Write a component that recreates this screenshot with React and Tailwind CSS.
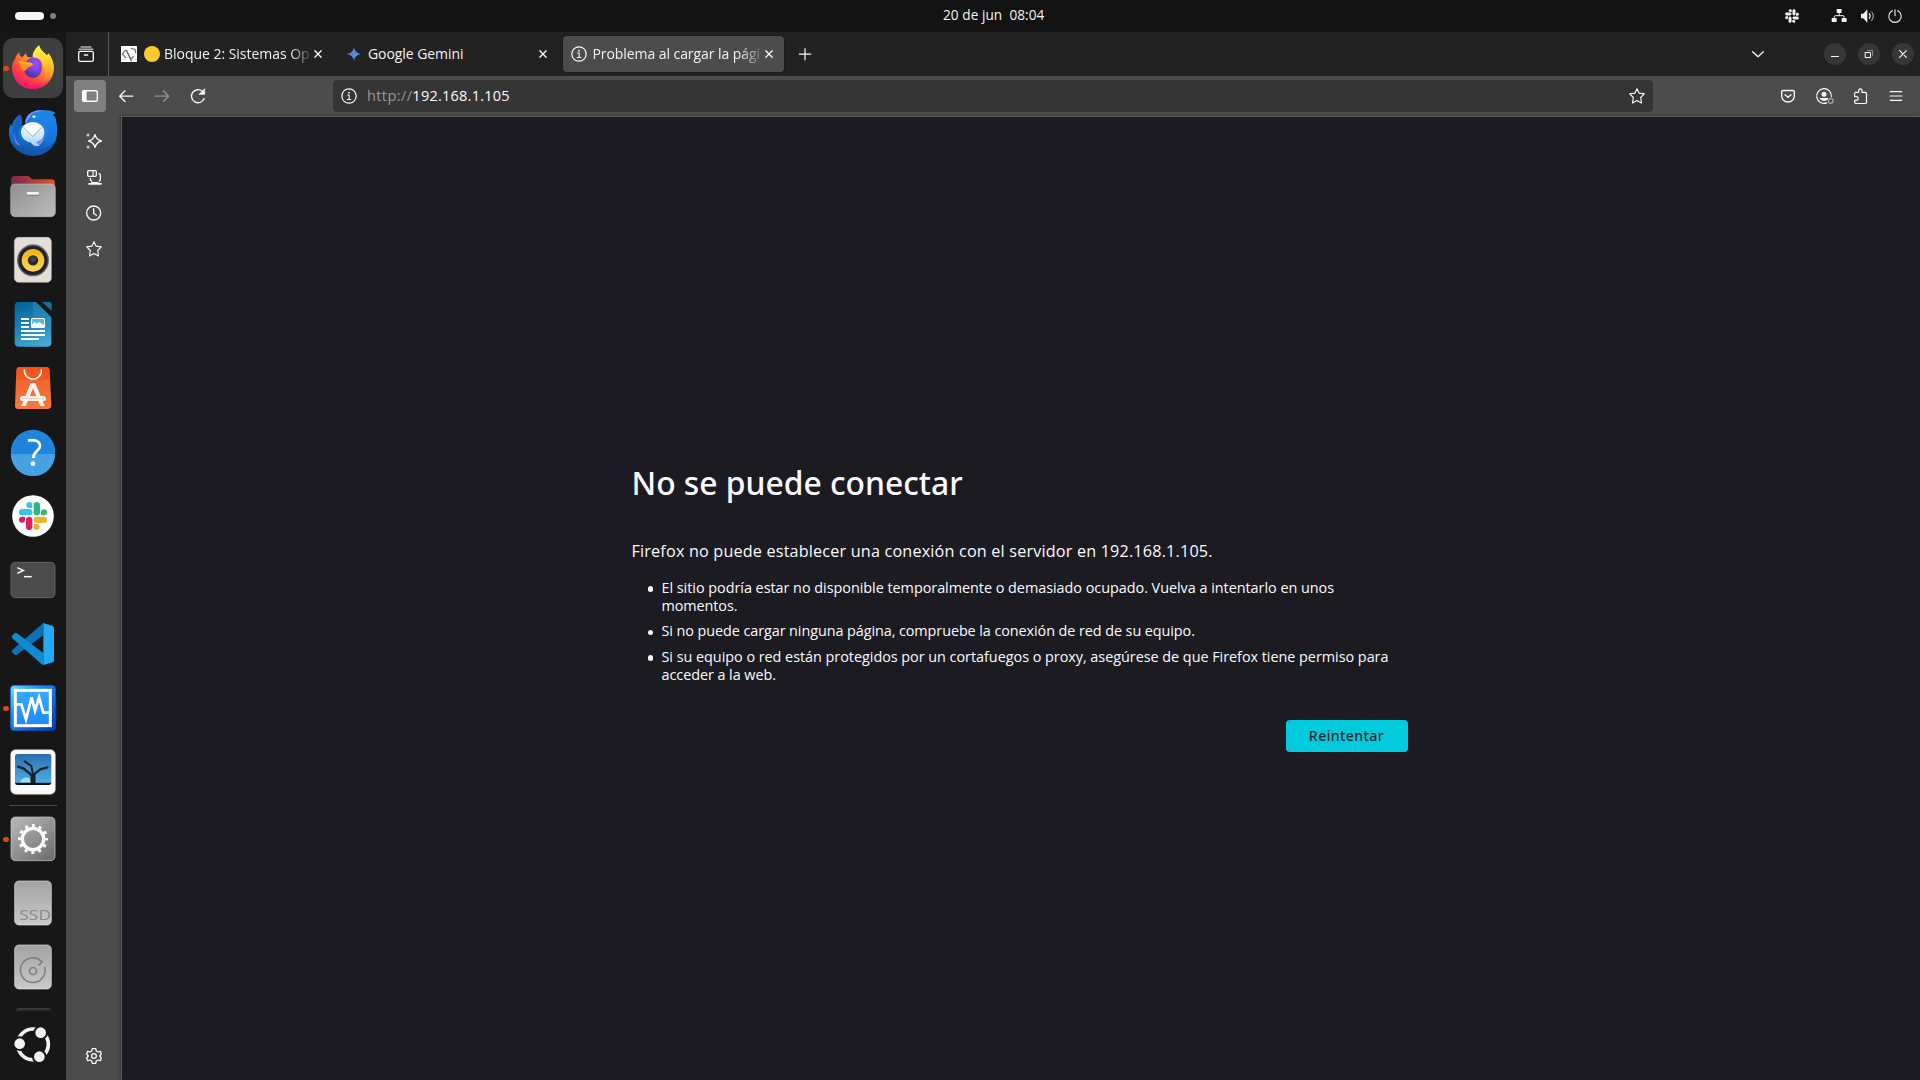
import React from "react";

/* Icons are drawn on a grid of three units per pixel, centred on (x, y). */
function Ico({ x, y, s = 24, className = "", children }) {
  return (
    <svg
      width={s}
      height={s}
      viewBox={`${x - 1.5 * s} ${y - 1.5 * s} ${3 * s} ${3 * s}`}
      fill="none"
      stroke="#fbfbfe"
      strokeWidth="3.6"
      strokeLinecap="round"
      strokeLinejoin="round"
      className={`block shrink-0 ${className}`}
    >
      {children}
    </svg>
  );
}

function DockIcon({ x = 99, y, running, active, children }) {
  return (
    <div className="relative flex h-16 w-full shrink-0 items-center justify-center">
      <div className={`flex size-[60px] items-center justify-center rounded-[11px] ${active ? "bg-[#3f3f3f]" : ""}`}>
        <svg width="48" height="48" viewBox={`${x - 72} ${y - 72} 144 144`} fill="none" className="block">
          {children}
        </svg>
      </div>
      {running && <span className="absolute left-[3px] top-[29.500px] size-[5.500px] rounded-full bg-[#dd4814]" />}
    </div>
  );
}

const Close = ({ x = 954, y = 162 }) => (
  <Ico x={x} y={y} s={16}>
    <path d={`M${x - 9.5} ${y - 9.5}l19 19M${x + 9.5} ${y - 9.5}l-19 19`} strokeWidth="4" />
  </Ico>
);

const Info = ({ s = 16 }) => (
  <Ico x={0} y={0} s={s}>
    <circle r="21.5" />
    <path d="M-4 -3h4.500v13.500M-5 10.500h10" strokeWidth="3.200" />
    <circle cx="0" cy="-10" r="2.600" fill="#fbfbfe" stroke="none" />
  </Ico>
);

const Star = ({ s = 24 }) => (
  <Ico x={0} y={0} s={s}>
    <path d="M0 -22L6.500 -8.500L22 -6.500L11 4.500L13.500 21L0 13.500L-13.500 21L-11 4.500L-22 -6.500L-6.500 -8.500Z" strokeWidth="3.400" />
  </Ico>
);

function TopBar() {
  return (
    <header className="flex h-8 w-full shrink-0 items-center bg-[#131313]">
      <div className="flex w-[943px] items-center gap-1.5 pl-[15px]">
        <span className="h-2 w-[29px] rounded-full bg-[#f6f6f6]" />
        <span className="size-1.5 rounded-full bg-[#808080]" />
      </div>
      <div className="whitespace-pre pb-[2px] text-[13.6px] leading-5 tracking-[0.06px] text-[#f2f2f2]">20 de jun  08:04</div>
      <div className="ml-auto flex items-center pr-[13px]">
        <Ico x={576} y={48} className="mr-[23px]">
          <g fill="#f2f2f2" stroke="none" transform="translate(576 48) scale(.49) translate(-99 -318)">
            <rect x="57" y="297" width="39" height="18" rx="9" />
            <path d="M97 294H88A9 9 0 1 1 97 285Z" />
            <rect x="102" y="276" width="18" height="39" rx="9" />
            <path d="M123 316V307A9 9 0 1 1 132 316Z" />
            <rect x="78" y="321" width="18" height="39" rx="9" />
            <path d="M75 320V329A9 9 0 1 1 66 320Z" />
            <rect x="102" y="321" width="39" height="18" rx="9" />
            <path d="M101 342H110A9 9 0 1 1 101 351Z" />
          </g>
        </Ico>
        <Ico x={718} y={48} className="mr-[5px]">
          <g fill="#f2f2f2" stroke="none">
            <rect x="711" y="27" width="15" height="12" rx="2" />
            <rect x="696" y="54" width="15" height="12" rx="2" />
            <rect x="726" y="54" width="15" height="12" rx="2" />
          </g>
          <path d="M718.500 39v7M704 54v-4q0-3 3-3h23q3 0 3 3v4" stroke="#f2f2f2" strokeWidth="3" />
        </Ico>
        <Ico x={804} y={48} className="mr-[3px]">
          <path d="M783 41h7l12-13v40l-12-13h-7z" fill="#f2f2f2" stroke="none" />
          <path d="M808 41q5 7 0 14" stroke="#f2f2f2" strokeWidth="3.500" />
          <path d="M815 36q10 12 0 25" stroke="#a0a0a0" strokeWidth="3.500" />
        </Ico>
        <Ico x={886} y={47}>
          <path d="M878 31a18.500 18.500 0 1 0 16 0M886 28v18" stroke="#f2f2f2" strokeWidth="3.200" />
        </Ico>
      </div>
    </header>
  );
}

function Dock() {
  return (
    <nav className="flex h-full w-[66px] shrink-0 flex-col bg-[#171717] pt-1">
      <DockIcon y={204} running active>
        <defs>
          <linearGradient id="ffBody" x1="145" y1="150" x2="62" y2="258" gradientUnits="userSpaceOnUse">
            <stop offset="0" stopColor="#fff44f" />
            <stop offset=".28" stopColor="#ffb72a" />
            <stop offset=".55" stopColor="#ff6a30" />
            <stop offset=".8" stopColor="#ff3647" />
            <stop offset="1" stopColor="#e81e78" />
          </linearGradient>
          <linearGradient id="ffBottom" x1="99" y1="232" x2="99" y2="267" gradientUnits="userSpaceOnUse">
            <stop offset="0" stopColor="#ff3750" stopOpacity="0" />
            <stop offset="1" stopColor="#e8127c" />
          </linearGradient>
          <radialGradient id="ffBall" cx="108" cy="192" r="38" gradientUnits="userSpaceOnUse">
            <stop offset="0" stopColor="#a64bff" />
            <stop offset=".55" stopColor="#7a43e0" />
            <stop offset="1" stopColor="#5036ad" />
          </radialGradient>
          <linearGradient id="ffFlame" x1="115" y1="138" x2="140" y2="245" gradientUnits="userSpaceOnUse">
            <stop offset="0" stopColor="#fff44f" />
            <stop offset=".45" stopColor="#ffd02e" />
            <stop offset="1" stopColor="#ff8a26" stopOpacity="0" />
          </linearGradient>
        </defs>
        <path d="M58 157C57 164 60 169 66 172L79 160C78 165 80 169 84 172L100 172C98 156 108 145 117 136C120 147 125 151 131 157L139 168L146 160C156 174 162 188 162 205A63 62 0 1 1 36 204C36 192 40 184 45 177C47 169 52 163 58 157Z" fill="url(#ffBody)" />
        <path d="M41 230A63 62 0 0 0 157 230C140 256 62 258 41 230Z" fill="url(#ffBottom)" />
        <path d="M98 170C98 155 108 145 117 136C120 147 125 151 131 157C145 170 152 175 155 190C160 215 150 235 128 248C138 230 137 205 125 188C117 178 108 174 98 170Z" fill="url(#ffFlame)" />
        <path d="M80 184C88 172 103 168 120 180L124 187C128 205 126 228 102 234C84 235 73 222 72 208Z" fill="url(#ffBall)" />
        <path d="M54 184C64 180 73 187 83 187C90 187 97 190 99 194C96 199 89 200 84 203C76 209 81 211 72 213C60 207 61 193 54 184Z" fill="#ff8f1f" />
        <path d="M55 184C64 180 73 187 83 187C90 187 97 190 98 193C85 195 68 195 55 184Z" fill="#ffb52e" />
      </DockIcon>
      <DockIcon y={396}>
        <defs>
          <linearGradient id="tbBody" x1="120" y1="332" x2="90" y2="468" gradientUnits="userSpaceOnUse">
            <stop offset="0" stopColor="#1b87ee" />
            <stop offset=".6" stopColor="#1673d8" />
            <stop offset="1" stopColor="#0f4f9f" />
          </linearGradient>
          <linearGradient id="tbEgg" x1="98" y1="364" x2="98" y2="434" gradientUnits="userSpaceOnUse">
            <stop offset="0" stopColor="#ffffff" />
            <stop offset="1" stopColor="#b4d9fd" />
          </linearGradient>
        </defs>
        <path d="M77 372C72 345 100 326 132 331C148 330 160 334 167 340L158 344C167 350 169 358 168 364C172 376 172 390 171 399A72 69 0 0 1 27 399C26 386 29 379 33 371L36 380C39 362 48 350 60 344C68 354 68 366 64 378Z" fill="url(#tbBody)" />
        <path d="M60 344C68 354 68 366 64 378C54 392 52 408 58 424C40 414 34 394 41 372C45 358 51 350 60 344Z" fill="#1660bd" />
        <path d="M76 374C72 348 98 328 128 331C110 336 96 342 90 352C84 358 78 364 76 374Z" fill="#8d8cf3" />
        <path d="M50 386C40 405 46 424 60 434C49 440 34 412 50 386Z" fill="#6e83ec" />
        <path d="M88 352C94 336 120 332 136 338C152 368 146 420 116 432C132 400 124 372 88 352Z" fill="#1c82e8" />
        <path d="M34 424A72 69 0 0 0 169 415C150 460 60 462 34 424Z" fill="#1258ad" />
        <path d="M92 426C104 434 122 426 131 411C132 428 118 438 106 439C98 436 94 432 92 426Z" fill="#8f94f5" />
        <ellipse cx="98" cy="397" rx="35" ry="31" fill="url(#tbEgg)" />
        <path d="M88 420C94 432 106 438 120 438C110 432 106 426 106 418Z" fill="#b4d9fd" />
        <path d="M71 382L98 410L125 382" stroke="#9fb4c8" strokeWidth="3" strokeLinejoin="round" />
        <path d="M72 381L98 406L124 381Q98 358 72 381Z" fill="#f8fbff" />
        <ellipse cx="102" cy="350" rx="5" ry="3.500" fill="#e8f4ff" />
      </DockIcon>
      <DockIcon y={588}>
        <defs>
          <linearGradient id="fBack" x1="33" y1="0" x2="165" y2="0" gradientUnits="userSpaceOnUse">
            <stop offset="0" stopColor="#772953" />
            <stop offset="1" stopColor="#e95420" />
          </linearGradient>
          <linearGradient id="fFront" x1="60" y1="552" x2="140" y2="650" gradientUnits="userSpaceOnUse">
            <stop offset="0" stopColor="#949494" />
            <stop offset="1" stopColor="#b8b8b8" />
          </linearGradient>
        </defs>
        <path d="M33 580V540Q33 528 45 528H82Q87 528 90 532L94 536Q96 538 100 538H154Q165 538 165 550V580Z" fill="url(#fBack)" />
        <rect x="32" y="552" width="134" height="98" rx="13" fill="url(#fFront)" stroke="#c8c8c8" strokeWidth="1.500" />
        <rect x="80" y="579" width="37" height="8" rx="4" fill="#777" />
        <rect x="80" y="576" width="37" height="8" rx="4" fill="#f4f4f4" />
      </DockIcon>
      <DockIcon y={120}>
        <defs>
          <linearGradient id="rbY" x1="0" y1="85" x2="0" y2="155" gradientUnits="userSpaceOnUse">
            <stop offset="0" stopColor="#eab308" />
            <stop offset="1" stopColor="#ffd95a" />
          </linearGradient>
        </defs>
        <rect x="43" y="52" width="111" height="135" rx="13" fill="#e4dfd6" stroke="#c9c5bc" strokeWidth="1.500" />
        <circle cx="99" cy="121" r="48" fill="#6a6a6e" />
        <circle cx="99" cy="121" r="44" fill="#20202c" />
        <circle cx="99" cy="121" r="34" fill="url(#rbY)" />
        <circle cx="99" cy="121" r="15.500" fill="#262626" />
        <circle cx="99" cy="118" r="9" fill="#444" />
      </DockIcon>
      <DockIcon y={312}>
        <defs>
          <linearGradient id="wr" x1="60" y1="246" x2="120" y2="380" gradientUnits="userSpaceOnUse">
            <stop offset="0" stopColor="#05629a" />
            <stop offset=".5" stopColor="#1c84b8" />
            <stop offset="1" stopColor="#46a8d6" />
          </linearGradient>
        </defs>
        <path d="M56 246H108L154 292V368Q154 380 142 380H56Q44 380 44 368V258Q44 246 56 246Z" fill="url(#wr)" />
        <path d="M99 246H108L154 292V312H99Z" fill="#3c93bd" opacity=".35" />
        <path d="M126 246H148Q155 246 155 253V273Z" fill="#1c6c98" />
        <path d="M63 297H87M63 309H87M63 321H87M63 333H135M63 345H135M63 357H117" stroke="#fff" strokeWidth="6" />
        <rect x="94.500" y="295.500" width="39" height="27" rx="4" fill="#5ab8e0" stroke="#fff" strokeWidth="3.500" />
        <path d="M96 320V314L104 305L110 311L118 306L126 312L132 316V321Z" fill="#fff" />
      </DockIcon>
      <DockIcon y={504}>
        <defs>
          <linearGradient id="st" x1="0" y1="440" x2="0" y2="568" gradientUnits="userSpaceOnUse">
            <stop offset="0" stopColor="#f4501d" />
            <stop offset=".3" stopColor="#f4591f" />
            <stop offset=".31" stopColor="#f3652f" />
            <stop offset="1" stopColor="#f47a40" />
          </linearGradient>
        </defs>
        <path d="M57 441H141Q148 441 149 449L154 556Q154 567 143 567H55Q44 567 45 556L49 449Q50 441 57 441Z" fill="url(#st)" />
        <path d="M73 449C72 487 126 487 124 449" stroke="#fff" strokeWidth="4.500" strokeLinecap="round" />
        <path d="M92 489H106L134 558H121L99 505L77 558H64Z" fill="#fff4ee" />
        <rect x="60" y="528" width="78" height="15" rx="7.500" fill="#fff4ee" />
        <path d="M66 536H132" stroke="#f9b498" strokeWidth="2" />
      </DockIcon>
      <DockIcon y={126}>
        <circle cx="99" cy="126" r="66.500" fill="#2084dc" />
        <path d="M32.500 132A66.500 66.500 0 0 0 165.500 132Z" fill="#46a2e2" />
        <path d="M84 92C100 88 120 92 120 108C120 122 100 124 100 144" stroke="#fff" strokeWidth="8" />
        <circle cx="99" cy="161" r="7" fill="#fff" />
      </DockIcon>
      <DockIcon y={318}>
        <circle cx="99" cy="318" r="62.500" fill="#fff" />
        <rect x="57" y="297" width="40" height="19" rx="9.500" fill="#36c5f0" />
        <path d="M97 294H88A9 9 0 1 1 97 285Z" fill="#36c5f0" />
        <rect x="101" y="276" width="19" height="40" rx="9.500" fill="#2eb67d" />
        <path d="M123 316V307A9 9 0 1 1 132 316Z" fill="#2eb67d" />
        <rect x="78" y="320" width="19" height="40" rx="9.500" fill="#e01e5a" />
        <path d="M75 320V329A9 9 0 1 1 66 320Z" fill="#e01e5a" />
        <rect x="101" y="320" width="40" height="19" rx="9.500" fill="#ecb22e" />
        <path d="M101 342H110A9 9 0 1 1 101 351Z" fill="#ecb22e" />
      </DockIcon>
      <DockIcon y={510}>
        <rect x="33" y="457" width="132" height="106" rx="13" fill="#4b4b4b" stroke="#6c6c6c" strokeWidth="2.500" />
        <path d="M52 473L70 481.500L52 490" stroke="#fff" strokeWidth="4.500" />
        <path d="M72 500H95" stroke="#fff" strokeWidth="4.500" />
      </DockIcon>
      <DockIcon y={132}>
        <path d="M130 69L36 151V157L45 165Q48 166 51 164L130 106Z" fill="#0a72b6" />
        <path d="M36 107L45 99Q48 98 51 100L130 159V195Q127 195 125 193L36 114Z" fill="#108bd3" />
        <path d="M130 69L158 78Q162 80 162 84V181Q162 185 158 187L130 195Z" fill="#26a9f4" />
      </DockIcon>
      <DockIcon y={324} running>
        <defs>
          <linearGradient id="vb" x1="31" y1="256" x2="167" y2="392" gradientUnits="userSpaceOnUse">
            <stop offset="0" stopColor="#6fe0fa" />
            <stop offset=".35" stopColor="#1d8df2" />
            <stop offset="1" stopColor="#0534b4" />
          </linearGradient>
          <linearGradient id="vb2" x1="0" y1="275" x2="0" y2="373" gradientUnits="userSpaceOnUse">
            <stop offset="0" stopColor="#35aafb" />
            <stop offset="1" stopColor="#2588f6" />
          </linearGradient>
        </defs>
        <rect x="31" y="256" width="136" height="136" rx="12" fill="url(#vb)" stroke="#0a4fc0" strokeWidth="2" />
        <rect x="46" y="271" width="105" height="106" fill="url(#vb2)" stroke="#fff" strokeWidth="9" />
        <path d="M50 313H64L78 358L95 292L105 332L117 292L130 338H148" stroke="#fff" strokeWidth="8" strokeLinejoin="miter" />
      </DockIcon>
      <DockIcon y={516}>
        <defs>
          <linearGradient id="sh" x1="0" y1="462" x2="0" y2="554" gradientUnits="userSpaceOnUse">
            <stop offset="0" stopColor="#2a6db0" />
            <stop offset="1" stopColor="#4fb4e8" />
          </linearGradient>
        </defs>
        <rect x="32" y="449" width="134" height="134" rx="15" fill="#fafafa" stroke="#c8c8c8" strokeWidth="1.500" />
        <rect x="45" y="462" width="109" height="92" rx="7" fill="url(#sh)" />
        <path d="M60 549A20 24 0 0 1 98 549Z" fill="#a4dbf8" />
        <path d="M45 548H154Q153 555 147 555H52Q46 555 45 548Z" fill="#06111b" />
        <path d="M99 549V524" stroke="#14222e" strokeWidth="15" />
        <path d="M98 528L70 505L54 500M101 524L121 508L142 502" stroke="#14222e" strokeWidth="7" strokeLinecap="round" />
        <path d="M99 524L94 498L74 484" stroke="#14222e" strokeWidth="6" strokeLinecap="round" />
      </DockIcon>
      <div className="flex h-[3px] shrink-0 items-center justify-center">
        <span className="h-px w-12 bg-[#4a4a4a]" />
      </div>
      <DockIcon y={147} running>
        <defs>
          <linearGradient id="gr" x1="40" y1="80" x2="150" y2="214" gradientUnits="userSpaceOnUse">
            <stop offset="0" stopColor="#b8b8b8" />
            <stop offset="1" stopColor="#6e6e6e" />
          </linearGradient>
        </defs>
        <rect x="33" y="81" width="132" height="131" rx="13" fill="url(#gr)" stroke="#cfcfcf" strokeWidth="2" />
        <circle cx="99" cy="147" r="32" stroke="#fafafa" strokeWidth="10" />
        <circle cx="99" cy="147" r="40" stroke="#fafafa" strokeWidth="10" strokeDasharray="9 11.944" strokeDashoffset="4.500" />
      </DockIcon>
      <DockIcon y={339}>
        <defs>
          <linearGradient id="dk" x1="0" y1="272" x2="0" y2="406" gradientUnits="userSpaceOnUse">
            <stop offset="0" stopColor="#a2a2a2" />
            <stop offset="1" stopColor="#cacaca" />
          </linearGradient>
        </defs>
        <rect x="44" y="273" width="110" height="132" rx="13" fill="url(#dk)" stroke="#dedede" strokeWidth="2" />
        <text x="58" y="389" fontSize="46" textLength="95" lengthAdjust="spacingAndGlyphs" fill="#888" fontFamily="Open Sans, sans-serif">SSD</text>
      </DockIcon>
      <DockIcon y={531}>
        <defs>
          <linearGradient id="dk2" x1="0" y1="464" x2="0" y2="598" gradientUnits="userSpaceOnUse">
            <stop offset="0" stopColor="#a2a2a2" />
            <stop offset="1" stopColor="#cacaca" />
          </linearGradient>
        </defs>
        <rect x="44" y="465" width="110" height="132" rx="13" fill="url(#dk2)" stroke="#dedede" strokeWidth="2" />
        <circle cx="99" cy="543" r="10.500" stroke="#808080" strokeWidth="5" />
        <path d="M134 531A37 37 0 1 1 126 516L116 526" stroke="#808080" strokeWidth="5" />
      </DockIcon>
      <div className="flex h-[13px] shrink-0 items-end justify-center pb-px">
        <span className="h-[3px] w-[35px] rounded-t-md bg-linear-to-b from-[#404040] to-[#242424]" />
      </div>
      <DockIcon y={762}>
        <circle cx="99" cy="763" r="46" stroke="#f4f4f4" strokeWidth="11" />
        <g stroke="#171717" strokeWidth="6" fill="#f4f4f4">
          <circle cx="122" cy="728" r="19" />
          <circle cx="59" cy="761" r="19" />
          <circle cx="118" cy="800" r="19" />
        </g>
      </DockIcon>
    </nav>
  );
}

function TabStrip() {
  return (
    <div className="flex h-11 shrink-0 items-center bg-[#222222]">
      <div className="flex h-11 w-[43px] shrink-0 items-center justify-center border-r border-[#5b5b5b] pr-[2px]">
        <Ico x={258} y={162}>
          <rect x="236" y="154" width="44" height="30" rx="5" strokeWidth="4" />
          <path d="M237 147.500H279M243 141H273" strokeWidth="3" />
          <path d="M253 165H263" strokeWidth="4" />
        </Ico>
      </div>
      <div className="flex items-center gap-1 pl-1">
        <div className="flex h-9 w-[221px] items-center pl-2">
          <Ico x={387} y={162} s={16} className="mr-[7px]">
            <rect x="363" y="138" width="48" height="48" fill="#fff" stroke="none" />
            <path d="M376 151L367 162L377 173M394 145L405 148L407 158M400 170L392 176" stroke="#777" strokeWidth="4" />
            <path d="M380 152L394 182" stroke="#555" strokeWidth="4" />
            <path d="M366 178H378M398 178H410" stroke="#dcdcdc" strokeWidth="3" />
          </Ico>
          <span className="mr-[4px] size-4 shrink-0 rounded-full bg-[#fdcb2e]" />
          <span className="h-5 w-[146px] overflow-hidden whitespace-nowrap text-[14px] leading-5 tracking-[-0.03px] text-[#f2f2f4] [mask-image:linear-gradient(to_right,black_126px,transparent_150px)]">
            Bloque 2: Sistemas Op
          </span>
          <Close />
        </div>
        <div className="flex h-9 w-[221px] items-center pl-2">
          <Ico x={1062} y={162} s={16} className="mr-[6px]">
            <defs>
              <linearGradient id="gem" x1="1042" y1="0" x2="1082" y2="0" gradientUnits="userSpaceOnUse">
                <stop offset="0" stopColor="#7a78d8" />
                <stop offset="1" stopColor="#2f9be0" />
              </linearGradient>
            </defs>
            <path d="M1062 142Q1065 159 1083 162Q1065 165 1062 182Q1059 165 1041 162Q1059 159 1062 142Z" fill="url(#gem)" stroke="none" />
          </Ico>
          <span className="w-[167px] whitespace-nowrap text-[14px] leading-5 tracking-[-0.07px] text-[#f2f2f4]">Google Gemini</span>
          <Close />
        </div>
        <div className="flex h-9 w-[221px] items-center rounded bg-[#4c4c4c] pl-[7.500px] shadow-[0_0_2px_rgba(0,0,0,0.6)]">
          <Info />
          <span className="ml-[6px] h-5 w-[168px] overflow-hidden whitespace-nowrap text-[14px] leading-5 tracking-[-0.07px] text-[#f2f2f4] [mask-image:linear-gradient(to_right,black_146px,transparent_174px)]">
            Problema al cargar la pági
          </span>
          <Close />
        </div>
      </div>
      <Ico x={1217} y={163} className="ml-[9px]">
        <path d="M1200 163.500H1234M1217 146.500V180.500" strokeWidth="3.500" />
      </Ico>
      <div className="ml-auto flex items-center pr-1.5">
        <Ico x={474} y={160} className="mr-[54px]">
          <path d="M458 153L474 168L490 153" strokeWidth="3.800" />
        </Ico>
        <div className="flex gap-3">
          <Ico x={705} y={162} s={22}>
            <circle cx="705" cy="162" r="33" fill="#373737" stroke="none" />
            <path d="M693 169.500H717" strokeWidth="3" strokeLinecap="butt" />
          </Ico>
          <Ico x={807} y={162} s={22}>
            <circle cx="807" cy="162" r="33" fill="#373737" stroke="none" />
            <rect x="796.500" y="157.500" width="15" height="15" strokeWidth="3" />
            <path d="M801 151.500H817.500V168" stroke="#8a8a8a" strokeWidth="3" strokeLinecap="butt" />
          </Ico>
          <Ico x={909} y={162} s={22}>
            <circle cx="909" cy="162" r="33" fill="#373737" stroke="none" />
            <path d="M899 152L919 172M919 152L899 172" strokeWidth="3.600" />
          </Ico>
        </div>
      </div>
    </div>
  );
}

function Toolbar() {
  return (
    <div className="flex h-10 shrink-0 items-center bg-[#4c4c4c] pl-2">
      <div className="flex size-8 items-center justify-center rounded bg-[#808080]">
        <Ico x={270} y={288}>
          <rect x="248" y="272" width="44" height="32" rx="5" strokeWidth="4.500" />
          <path d="M248 277Q248 272 253 272H258V304H253Q248 304 248 299Z" fill="#fbfbfe" />
        </Ico>
      </div>
      <Ico x={378} y={288} className="ml-2">
        <path d="M398 288.500H359M375 272.500L359 288.500L375 304.500" strokeWidth="4" />
      </Ico>
      <Ico x={486} y={288} className="ml-3 opacity-40">
        <path d="M466 288.500H505M490 272.500L506 288.500L490 304.500" strokeWidth="4" />
      </Ico>
      <Ico x={594} y={288} className="ml-3">
        <path d="M612 296A19.500 19.500 0 1 1 607 274" strokeWidth="4.200" />
        <path d="M614 267V283H598Z" fill="#fbfbfe" strokeWidth="2" />
      </Ico>
      <div className="ml-[123px] flex h-8 w-[1320px] items-center rounded bg-[#353535] pl-[7.500px] pr-1">
        <Info />
        <span className="ml-[10.500px] flex whitespace-nowrap pb-px text-[14.5px] leading-5">
          <span className="tracking-[0.4px] text-[#989899]">http://</span>
          <span className="tracking-[0.24px] text-[#fbfbfe]">192.168.1.105</span>
        </span>
        <span className="ml-auto"><Star /></span>
      </div>
      <div className="ml-auto flex items-center gap-3 pr-3">
        <Ico x={564} y={288}>
          <path d="M549 271.500H579Q583 271.500 583 275.500V288A19 18 0 0 1 545 288V275.500Q545 271.500 549 271.500Z" strokeWidth="4" />
          <path d="M555 284L564 292L573 284" strokeWidth="4" />
        </Ico>
        <Ico x={672} y={288}>
          <path d="M694 290A22 22 0 1 0 680 308.500" />
          <circle cx="672" cy="283" r="7.500" fill="#fbfbfe" stroke="none" />
          <path d="M658 294H684V298Q679 303 672 303Q663 303 658 294Z" fill="#fbfbfe" stroke="none" />
          <circle cx="692" cy="303" r="7" stroke="#a8a8a8" strokeWidth="3.500" />
        </Ico>
        <Ico x={780} y={288}>
          <path d="M765 277H776V271.500A5 5 0 0 1 786 271.500V277H796Q799.500 277 799.500 280.500V307Q799.500 310.500 796 310.500H768Q764 310.500 764 307V301H769A5.500 5.500 0 0 0 769 290H764V281" />
        </Ico>
        <Ico x={888} y={288}>
          <path d="M871 275H905M871 288H905M871 301H905" />
        </Ico>
      </div>
    </div>
  );
}

function Sidebar() {
  return (
    <aside className="flex w-[55px] shrink-0 flex-col items-center gap-3 bg-[#4c4c4c] pb-3 pl-px pt-[13px]">
      <Ico x={282} y={423}>
        <path d="M285 404Q289 419 304 423Q289 427 285 442Q281 427 266 423Q281 419 285 404Z" strokeWidth="4.200" />
        <circle cx="264" cy="405" r="4.500" fill="#c9c9cb" stroke="none" />
        <circle cx="264" cy="441" r="4.500" fill="#c9c9cb" stroke="none" />
      </Ico>
      <Ico x={282} y={531}>
        <rect x="263" y="512" width="26" height="17" rx="3" strokeWidth="4" />
        <path d="M279 512V529" strokeWidth="3.500" />
        <path d="M297 521Q301 521 301 526V539Q301 542 298 543M271 535V538Q271 542 275 543" strokeWidth="4" />
        <path d="M267 551.500H303M276 549H294" strokeWidth="5.500" />
      </Ico>
      <Ico x={282} y={639}>
        <circle cx="281" cy="639" r="21" strokeWidth="4" />
        <path d="M281 626V640L289 646" strokeWidth="4" />
      </Ico>
      <Star />
      <Ico x={282} y={798} className="mt-auto">
        <path
          d="M277 776H287L289 783L294 786L301 784L304 792L299 798L304 804L301 812L294 810L289 813L287 820H277L275 813L270 810L263 812L260 804L265 798L260 792L263 784L270 786L275 783Z"
          strokeWidth="3.800"
        />
        <circle cx="282" cy="798" r="7" strokeWidth="4" />
      </Ico>
    </aside>
  );
}

function Bullet({ children }) {
  return (
    <li className="flex whitespace-nowrap">
      <span className="ml-4 mr-[8.500px] mt-[7.500px] size-[5.500px] shrink-0 rounded-full bg-[#fbfbfe]" />
      <div>{children}</div>
    </li>
  );
}

function ErrorPage() {
  return (
    <main className="flex flex-1 flex-col border-l border-t border-[#5c5c5c] bg-[#1c1b22] pl-[509.500px] pt-[345.500px] text-[#fbfbfe] shadow-[-1px_0_3px_rgba(0,0,0,0.3)]">
      <div className="flex w-[776px] flex-col">
        <h1 className="whitespace-nowrap font-['Noto_Sans',sans-serif] text-[31.800px] font-medium leading-10 tracking-[0]">No se puede conectar</h1>
        <p className="mt-9 whitespace-nowrap text-[16.2px] leading-6 tracking-[0.176px]">
          Firefox no puede establecer una conexión con el servidor en 192.168.1.105.
        </p>
        <ul className="mt-4 flex flex-col gap-[7.500px] text-[14.4px] leading-[18px]">
          <Bullet>
            <div className="tracking-[-0.027px]">El sitio podría estar no disponible temporalmente o demasiado ocupado. Vuelva a intentarlo en unos</div>
            <div className="tracking-[-0.08px]">momentos.</div>
          </Bullet>
          <Bullet>
            <div className="tracking-[-0.074px]">Si no puede cargar ninguna página, compruebe la conexión de red de su equipo.</div>
          </Bullet>
          <Bullet>
            <div className="tracking-[-0.027px]">Si su equipo o red están protegidos por un cortafuegos o proxy, asegúrese de que Firefox tiene permiso para</div>
            <div className="tracking-[-0.05px]">acceder a la web.</div>
          </Bullet>
        </ul>
        <button className="mt-[36.500px] flex h-8 w-[122px] items-center justify-center self-end rounded bg-[#00cadb] pb-px font-['Noto_Sans',sans-serif] text-[14.2px] font-medium tracking-[0.34px] text-[#2b2a33]">
          Reintentar
        </button>
      </div>
    </main>
  );
}

export default function App() {
  return (
    <div className="flex h-[1080px] w-[1920px] flex-col overflow-hidden bg-[#171717] font-['Open_Sans','Noto_Sans',sans-serif]">
      <TopBar />
      <div className="flex min-h-0 flex-1">
        <Dock />
        <div className="flex min-w-0 flex-1 flex-col bg-[#4c4c4c]">
          <TabStrip />
          <Toolbar />
          <div className="flex min-h-0 flex-1">
            <Sidebar />
            <ErrorPage />
          </div>
        </div>
      </div>
    </div>
  );
}
